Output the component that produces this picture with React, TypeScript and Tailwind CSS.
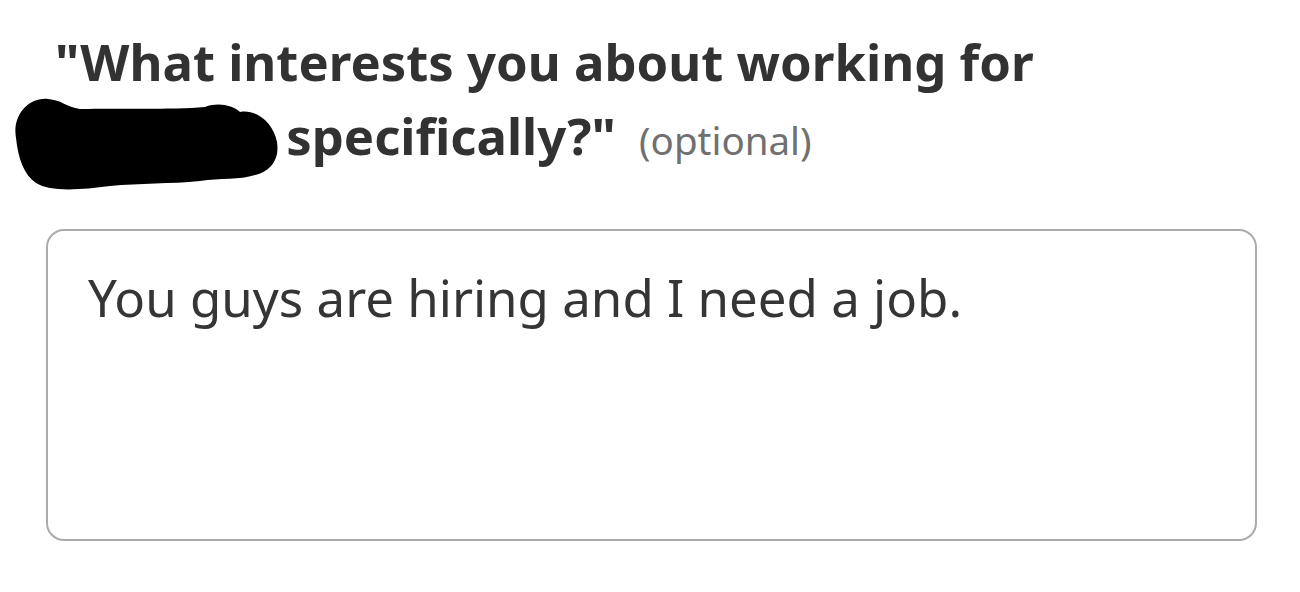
export default function App() {
  return (
    <div
      className="relative w-[1300px] h-[592px] bg-white pt-[25px] pl-[46px]"
      style={{ fontFamily: '"Noto Sans", "Open Sans", sans-serif' }}
    >
      {/* redaction scribble over the company name */}
      <svg className="absolute left-0 top-0" width="300" height="200" viewBox="0 0 300 200">
        <path
          d="M 16 138 C 12 116, 28 97, 48 99 C 62 100, 66 107, 80 109 C 120 108, 170 110, 205 107 C 218 102, 232 105, 240 112 C 256 109, 273 122, 277 142 C 280 162, 268 172, 255 175 C 240 180, 220 178, 200 181 C 170 184, 140 183, 110 186 C 80 190, 50 192, 36 183 C 24 175, 18 158, 16 138 Z"
          fill="#000"
        />
      </svg>

      <div className="pl-[9px] text-[50.8px] leading-[74px] font-bold text-[#323232]">
        <div>"What interests you about working for</div>
        <div>
          <span className="inline-block w-[218px]" /> specifically?"{' '}
          <span className="ml-[10px] text-[38.5px] leading-none font-normal text-[#707070]">(optional)</span>
        </div>
      </div>

      <textarea
        readOnly
        defaultValue="You guys are hiring and I need a job."
        className="mt-[56px] block w-[1211px] h-[312px] resize-none rounded-[18px] border-2 border-[#ababab] bg-white pl-[40px] pt-[31px] text-[51px] leading-[1.4] text-[#353535] outline-none"
        style={{ fontFamily: '"Noto Sans", "Open Sans", sans-serif' }}
      />
    </div>
  )
}
